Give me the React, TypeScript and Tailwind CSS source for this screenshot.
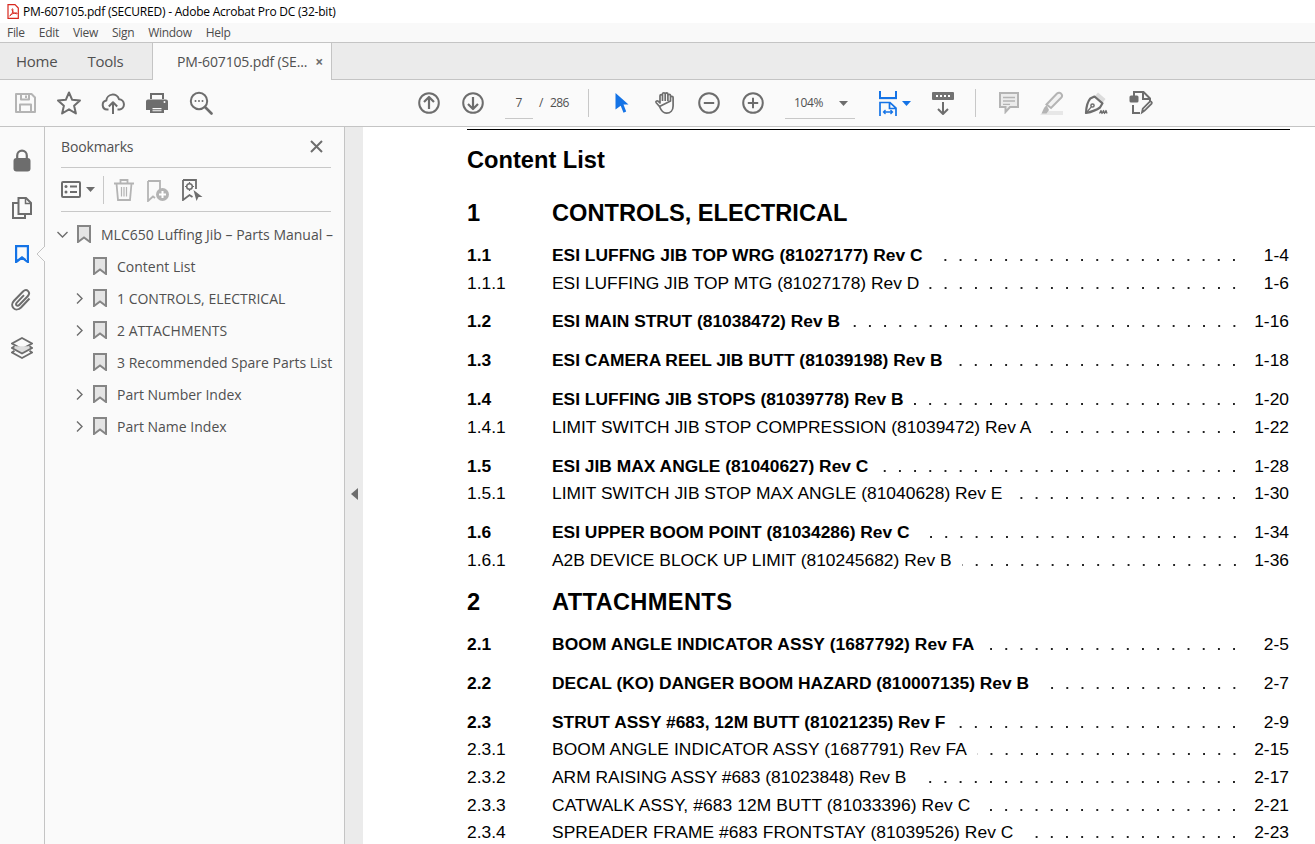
import React from "react";

const G = "#6d6d6d";
const L = "#b4b4b4";
const B = "#1473e6";

type SP = { children: React.ReactNode; s?: number; h?: number; c?: string; w?: number; vb?: string };
function I({ children, s = 24, h, c = G, w = 2, vb }: SP) {
  return (
    <svg width={s} height={h ?? s} viewBox={vb ?? `0 0 ${s} ${h ?? s}`} fill="none" stroke={c} strokeWidth={w} strokeLinejoin="round">
      {children}
    </svg>
  );
}

function Btn({ children, w = "w-[44px]" }: { children: React.ReactNode; w?: string }) {
  return <div className={`${w} h-full flex items-center justify-center shrink-0`}>{children}</div>;
}

const PdfLogo = () => (
  <svg width="12" height="15" viewBox="0 0 12 15" fill="none">
    <path d="M1 .7h7l3.3 3.3v10.3H1z" fill="#fff" stroke="#d8281f" strokeWidth="1.2" />
    <path d="M2.7 11.8c2-1 3.4-3.6 3.2-6.4-.1-1-1-.8-.9.1.2 2 2 4.1 4.6 4.3 1 .1.9-.9-.1-.9-2.500 0-5 1-6.800 2.900z" stroke="#d8281f" strokeWidth="1" />
  </svg>
);

const Save = () => (
  <I c={L}>
    <path d="M3 3h15.500L22 6.500V21H3z" />
    <path d="M8 3v5.500h8V3M13 4.500V7M7 21v-7.500h11V21" />
  </I>
);
const Star = () => (
  <I s={26} w={2}>
    <path d="M13 2.500l3.200 7.300 7.800.7-5.900 5.200 1.800 7.800L13 19.300l-6.900 4.200 1.800-7.800L2 10.500l7.800-.7z" />
  </I>
);
const Cloud = () => (
  <I>
    <path d="M7.500 18.500H6a4.500 4.500 0 0 1-.7-8.900A6.500 6.500 0 0 1 18 8.200a5.200 5.200 0 0 1 .7 10.300h-2.200" />
    <path d="M12 23V11.500M7.800 15.500l4.200-4.200 4.200 4.200" />
  </I>
);
const Printer = () => (
  <svg width="24" height="24" viewBox="0 0 24 24">
    <path fill={G} fillRule="evenodd" d="M5 2h14v6H5zM7 4v4h10V4zM3 8.500h18a2 2 0 0 1 2 2V19h-4v-4H5v4H1v-8.500a2 2 0 0 1 2-2z" />
    <path fill={G} fillRule="evenodd" d="M5 15h14v7H5zM7.500 17v1.300h9V17zM7.500 19.300v1h9v-1z" />
    <circle cx="19.500" cy="11" r="1" fill="#fff" />
  </svg>
);
const SearchDots = () => (
  <svg width="24" height="24" viewBox="0 0 24 24" fill="none" stroke={G} strokeWidth="2">
    <circle cx="10" cy="10" r="8.200" />
    <path d="M16 16l6.500 6.500" strokeWidth="2.600" strokeLinecap="round" />
    <circle cx="6.500" cy="10" r="1" fill={G} stroke="none" />
    <circle cx="10" cy="10" r="1" fill={G} stroke="none" />
    <circle cx="13.500" cy="10" r="1" fill={G} stroke="none" />
  </svg>
);
const CircleArrow = ({ down }: { down?: boolean }) => (
  <I s={22}>
    <circle cx="11" cy="11" r="9.800" />
    {down ? <path d="M11 5v12M6 12l5 5 5-5" strokeWidth="2.200" /> : <path d="M11 17V5M6 10l5-5 5 5" strokeWidth="2.200" />}
  </I>
);
const CirclePM = ({ plus }: { plus?: boolean }) => (
  <I s={22}>
    <circle cx="11" cy="11" r="9.800" />
    <path d="M5.800 11h10.400" strokeWidth="2" />
    {plus && <path d="M11 5.800v10.400" strokeWidth="2" />}
  </I>
);
const Pointer = () => (
  <svg width="14" height="21" viewBox="0 0 14 21">
    <path fill={B} d="M.5 0l13 11.500H8.500l2.700 7-2.700 1.200-2.800-7L.5 16.500z" />
  </svg>
);
const Hand = () => (
  <I w={1.700}>
    <path d="M5.500 15.500L2.200 11.800c-1-1.300.8-2.600 1.900-1.600L6 12V4.800c0-1.700 2.500-1.700 2.500 0V10M8.500 10V3c0-1.700 2.700-1.700 2.700 0v7M11.200 10V3.200c0-1.700 2.700-1.700 2.700 0V10M13.900 10V4.500c0-1.600 2.600-1.600 2.600 0V10M16.500 10V6.500c0-1.600 2.600-1.600 2.600 0V15c0 4.200-2.700 7.200-6.600 7.200-3.500 0-5.300-2.500-7-6.700z" />
  </I>
);
const Caret = ({ c = "#6d6d6d" }: { c?: string }) => (
  <svg width="9" height="5" viewBox="0 0 9 5"><path d="M0 0h9L4.500 5z" fill={c} /></svg>
);
const FitWidth = () => (
  <svg width="18" height="25" viewBox="0 0 18 25" fill="none" stroke={B} strokeWidth="2">
    <path d="M1 0v7h16V0" />
    <path d="M0 8.500h18" stroke="#dbe4ef" strokeWidth="1" />
    <path d="M1 25V11.500h10l6 5.500V25M10.500 11.500v6H17" strokeWidth="1.700" />
    <path d="M4.500 21h9M6.500 19l-2 2 2 2M11.500 19l2 2-2 2" strokeWidth="1.300" />
  </svg>
);
const Stamp = () => (
  <svg width="22" height="24" viewBox="0 0 22 24" fill="none">
    <rect x="0" y="1" width="22" height="8" rx="1" fill="#727272" />
    <path d="M4 4h2v2H4zM8 4h2v2H8zM12 4h2v2h-2zM16 4h2v2h-2z" fill="#fff" />
    <path d="M11 11v12M6 18l5 5 5-5" stroke={G} strokeWidth="2" />
  </svg>
);
const Comment = () => (
  <svg width="20" height="22" viewBox="0 0 20 22" fill="none" stroke={L} strokeWidth="2">
    <path d="M1 1h18v14h-8l-4.500 5v-5H1z" fill="#ececec" />
    <path d="M4 5.500h12M4 9h12M4 12.300h7" strokeWidth="1.300" />
  </svg>
);
const Highlighter = () => (
  <svg width="24" height="24" viewBox="0 0 24 24" fill="none">
    <path d="M0 24h23v-4H4z" fill="#e7e7e7" />
    <path d="M17 2.500c1.500-1.300 3.400-.9 4.300.3 1 1.200 1 2.700-.2 4L11 17l-4.500-3.500z" stroke={L} strokeWidth="2" fill="#f2f2f2" />
    <path d="M6.500 14L4 17l-2.500 5.500h5L9 19" fill={L} />
  </svg>
);
const Sign = () => (
  <svg width="24" height="24" viewBox="0 0 24 24" fill="none" stroke={G} strokeWidth="2.200" strokeLinejoin="round">
    <path d="M14 1.500l7.500 6.500-3 4-8-6.500z" fill="#dcdcdc" stroke="none" />
    <path d="M10.500 5.500l8 6.800-2.500 4.200C12 19.500 7 21 2 22c.2-5 1.700-11.500 4.300-14.500z" />
    <circle cx="8.500" cy="14.500" r="1.600" strokeWidth="1.500" />
    <path d="M2.500 21.500l4.800-5.700" strokeWidth="1.300" />
    <path d="M15.500 22.500l1.500-3 1 3 1.500-3 1 3 1.500-3 1 3" strokeWidth="1.300" />
  </svg>
);
const EditPdf = () => (
  <svg width="25" height="24" viewBox="0 0 25 24" fill="none" stroke={G} strokeWidth="2">
    <path d="M5 5V1h9.500L21 7.500V10M14 1.500V8h7M4 14v8h7" />
    <rect x="0.500" y="4.500" width="9" height="7" rx="1.500" fill={G} stroke="none" />
    <path d="M13 21.500l.8-3.800 7-7c1-.9 2.700.8 1.800 1.900l-7 7z" strokeWidth="1.800" />
  </svg>
);

const Lock = () => (
  <svg width="18" height="23" viewBox="0 0 18 23" fill="none">
    <path d="M4.200 11V6.500a4.800 4.800 0 0 1 9.600 0V11" stroke={G} strokeWidth="2.200" />
    <rect x="0.500" y="9" width="17" height="13.500" rx="3" fill={G} />
  </svg>
);
const Pages = () => (
  <svg width="20" height="22" viewBox="0 0 20 22" fill="none" stroke={G} strokeWidth="2">
    <path d="M6.500 17V1H14l5 5v11z" />
    <path d="M13.500 1v5.500H19" strokeWidth="1.500" />
    <path d="M6 6H1v15h12v-4" />
  </svg>
);
const Bookmark = ({ c = G, fill = "none", w = 2 }: { c?: string; fill?: string; w?: number }) => (
  <svg width="14" height="18" viewBox="0 0 14 18" fill={fill} stroke={c} strokeWidth={w}>
    <path d="M1 1h12v16l-6-4.500L1 17z" />
  </svg>
);
const Clip = () => (
  <I>
    <path d="M19.500 10.500l-8.500 9c-2.300 2.300-5.600 2.500-7.500.6-1.900-1.900-1.700-5 .5-7.300l9-9.300c1.600-1.500 3.800-1.700 5.100-.4 1.300 1.300 1.100 3.500-.4 5.100l-8.500 8.800c-.9.900-2 1-2.700.3-.7-.7-.6-1.800.3-2.700l7.200-7.500" />
  </I>
);
const Layers = () => (
  <svg width="22" height="23" viewBox="0 0 22 23" fill="none" stroke={G} strokeWidth="1.800">
    <path d="M11 1l10 5.500L11 12 1 6.500z" />
    <path d="M3.500 9.300L1 11l10 5.500L21 11l-2.500-1.700" fill="#ddd" />
    <path d="M3.500 13.800L1 15.500 11 21l10-5.500-2.500-1.700" />
  </svg>
);
const Options = () => (
  <svg width="20" height="17" viewBox="0 0 20 17" fill="none" stroke={G} strokeWidth="2">
    <rect x="1" y="1" width="18" height="15" rx="1" />
    <path d="M9 5.500h7M9 11h7" />
    <circle cx="5" cy="5.500" r="1.500" fill={G} stroke="none" />
    <circle cx="5" cy="11" r="1.500" fill={G} stroke="none" />
  </svg>
);
const Trash = () => (
  <svg width="20" height="22" viewBox="0 0 20 22" fill="none" stroke={L} strokeWidth="1.800">
    <path d="M0 4.500h20M6.500 4V1h7v3" />
    <path d="M2.500 4.500L4 21h12l1.500-16.500" />
    <path d="M7.500 8v9.500M10 8v9.500M12.500 8v9.500" strokeWidth="1.200" />
  </svg>
);
const BookmarkAdd = () => (
  <svg width="23" height="22" viewBox="0 0 23 22" fill="none">
    <path d="M1 1h12v9M1 1v20l5-4.500 2 1.500" stroke={L} strokeWidth="1.800" />
    <circle cx="15.500" cy="14.500" r="6.500" fill={L} />
    <path d="M12 14.500h7M15.500 11v7" stroke="#fff" strokeWidth="2" />
  </svg>
);
const BookmarkTarget = () => (
  <svg width="21" height="22" viewBox="0 0 21 22" fill="none" stroke={G} strokeWidth="1.800">
    <path d="M1 1h13v9M1 1v20l6.500-5 3 2" />
    <circle cx="7.500" cy="7.500" r="2.800" strokeWidth="1.500" />
    <path d="M7.500 3v1.500M7.500 10.500V12M3 7.500h1.500M10.500 7.500H12" strokeWidth="1.200" />
    <path d="M11.500 11l9 7h-4l-2 4z" fill={G} stroke="none" />
  </svg>
);
const Chevron = ({ down }: { down?: boolean }) => (
  <svg className="shrink-0" width="11" height="11" viewBox="0 0 11 11" fill="none" stroke={G} strokeWidth="1.400">
    {down ? <path d="M.5 3L5.500 8l5-5" /> : <path d="M3 .5L8 5.500l-5 5" />}
  </svg>
);

const tree: { t: string; chev: boolean }[] = [
  { t: "Content List", chev: false },
  { t: "1 CONTROLS, ELECTRICAL", chev: true },
  { t: "2 ATTACHMENTS", chev: true },
  { t: "3 Recommended Spare Parts List", chev: false },
  { t: "Part Number Index", chev: true },
  { t: "Part Name Index", chev: true },
];

const sec: { n: string; t: string; p: string; b?: boolean; m: string; k?: string }[] = [
  { n: "1.1", t: "ESI LUFFNG JIB TOP WRG (81027177) Rev C", p: "1-4", b: true, m: "mt-[17px]" },
  { n: "1.1.1", t: "ESI LUFFING JIB TOP MTG (81027178) Rev D", p: "1-6", m: "mt-[8px]" },
  { n: "1.2", t: "ESI MAIN STRUT (81038472) Rev B", p: "1-16", b: true, m: "mt-[18px]" },
  { n: "1.3", t: "ESI CAMERA REEL JIB BUTT (81039198) Rev B", p: "1-18", b: true, m: "mt-[19px]" },
  { n: "1.4", t: "ESI LUFFING JIB STOPS (81039778) Rev B", p: "1-20", b: true, m: "mt-[19px]" },
  { n: "1.4.1", t: "LIMIT SWITCH JIB STOP COMPRESSION (81039472) Rev A", p: "1-22", m: "mt-[8px]" },
  { n: "1.5", t: "ESI JIB MAX ANGLE (81040627) Rev C", p: "1-28", b: true, m: "mt-[19px]" },
  { n: "1.5.1", t: "LIMIT SWITCH JIB STOP MAX ANGLE (81040628) Rev E", p: "1-30", m: "mt-[7px]" },
  { n: "1.6", t: "ESI UPPER BOOM POINT (81034286) Rev C", p: "1-34", b: true, m: "mt-[19px]" },
  { n: "1.6.1", t: "A2B DEVICE BLOCK UP LIMIT (810245682) Rev B", p: "1-36", m: "mt-[8px]" },
];
const sec2: typeof sec = [
  { n: "2.1", t: "BOOM ANGLE INDICATOR ASSY (1687792) Rev FA", p: "2-5", b: true, m: "mt-[17px]", k: "tracking-[0.1px]" },
  { n: "2.2", t: "DECAL (KO) DANGER BOOM HAZARD (810007135) Rev B", p: "2-7", b: true, m: "mt-[19px]" },
  { n: "2.3", t: "STRUT ASSY #683, 12M BUTT (81021235) Rev F", p: "2-9", b: true, m: "mt-[19px]" },
  { n: "2.3.1", t: "BOOM ANGLE INDICATOR ASSY (1687791) Rev FA", p: "2-15", m: "mt-[7px]", k: "tracking-[0.1px]" },
  { n: "2.3.2", t: "ARM RAISING ASSY #683 (81023848) Rev B", p: "2-17", m: "mt-[8px]" },
  { n: "2.3.3", t: "CATWALK ASSY, #683 12M BUTT (81033396) Rev C", p: "2-21", m: "mt-[8px]", k: "tracking-[0.1px]" },
  { n: "2.3.4", t: "SPREADER FRAME #683 FRONTSTAY (81039526) Rev C", p: "2-23", m: "mt-[7px]", k: "tracking-[0.05px]" },
];

function Row({ r }: { r: (typeof sec)[number] }) {
  return (
    <div className={`${r.m} flex h-5 items-center shrink-0 text-[17.400px] leading-5 text-black ${r.b ? "font-bold" : ""}`}>
      <div className="w-[85px] shrink-0">{r.n}</div>
      <div className={`shrink-0 whitespace-nowrap ${r.k ?? ""}`}>{r.t}</div>
      <div className="flex-1 min-w-0 h-[2px] self-end mb-[4px] ml-[10px] mr-[37px] bg-[radial-gradient(circle,#222_0.8px,transparent_1.100px)] bg-[size:15.200px_2px] bg-right bg-repeat-x" />
      <div className="w-[10px] mr-[1px] shrink-0 flex justify-end whitespace-nowrap font-normal">
        <span className="shrink-0">{r.p}</span>
      </div>
    </div>
  );
}

export default function App() {
  return (
    <div className="w-[1315px] h-[844px] overflow-hidden bg-white flex flex-col font-['Open_Sans','Noto_Sans',sans-serif] text-[#505050]">
      {/* title bar */}
      <div className="h-[23px] shrink-0 bg-white flex items-center pl-[7px] gap-[4px] text-[12px] tracking-[-0.225px] text-black">
        <PdfLogo />
        <span>PM-607105.pdf (SECURED) - Adobe Acrobat Pro DC (32-bit)</span>
      </div>
      {/* menu */}
      <div className="h-[20px] shrink-0 bg-[#f9f9f9] border-b border-[#c4c4c4] flex items-center pl-[7px] gap-[14px] text-[12px] tracking-[-0.300px] text-[#4c4c4c]">
        <span>File</span><span>Edit</span><span>View</span><span>Sign</span><span>Window</span><span>Help</span>
      </div>
      {/* tabs */}
      <div className="h-[37px] shrink-0 bg-[#ebebeb] border-b border-[#c4c4c4] flex text-[#505050]">
        <div className="w-[152px] flex items-center pl-[16px] gap-[30px] text-[15px] tracking-[-0.250px]">
          <span>Home</span><span>Tools</span>
        </div>
        <div className="w-[180px] h-[37px] bg-[#fafafa] border-x border-[#c4c4c4] flex items-center pl-[24px] pr-[8px] justify-between text-[14px] tracking-[-0.150px]">
          <span>PM-607105.pdf (SE...</span>
          <span className="text-[14px] font-bold text-[#6d6d6d]">×</span>
        </div>
      </div>
      {/* toolbar */}
      <div className="h-[47px] shrink-0 bg-[#fafafa] border-b border-[#c4c4c4] flex items-center pl-[3px]">
        <Btn><Save /></Btn>
        <Btn><Star /></Btn>
        <Btn><Cloud /></Btn>
        <Btn><Printer /></Btn>
        <Btn><SearchDots /></Btn>
        <div className="w-[184px] shrink-0" />
        <Btn><CircleArrow /></Btn>
        <Btn><CircleArrow down /></Btn>
        <div className="ml-[10px] w-[28px] h-[30px] mt-[1px] border-b border-[#c8c8c8] flex items-center justify-center text-[12px]">7</div>
        <span className="ml-[6px] text-[12px] w-[6px]">/</span>
        <span className="ml-[5px] text-[12px] w-[22px] tracking-[-0.600px]">286</span>
        <div className="ml-[16px] w-px h-[28px] bg-[#c8c8c8]" />
        <div className="w-[10px] shrink-0" />
        <Btn><div className="ml-[2px] flex"><Pointer /></div></Btn>
        <Btn><div className="ml-[2px] flex"><Hand /></div></Btn>
        <Btn><CirclePM /></Btn>
        <Btn><CirclePM plus /></Btn>
        <div className="ml-[10px] w-[70px] h-[30px] mt-[1px] border-b border-[#c8c8c8] flex items-center justify-between pl-[9px] pr-[7px] text-[12px] tracking-[-0.350px]">
          <span>104%</span><Caret />
        </div>
        <div className="ml-[24px] w-[18px] flex justify-center"><FitWidth /></div>
        <div className="ml-[5px]"><Caret c={B} /></div>
        <div className="ml-[21px]"><Stamp /></div>
        <div className="ml-[21px] w-px h-[28px] bg-[#c8c8c8]" />
        <div className="ml-[23px]"><Comment /></div>
        <div className="ml-[21px]"><Highlighter /></div>
        <div className="ml-[20px]"><Sign /></div>
        <div className="ml-[21px]"><EditPdf /></div>
      </div>
      {/* main */}
      <div className="flex-1 min-h-0 flex">
        {/* rail */}
        <div className="relative w-[45px] shrink-0 bg-[#fafafa] border-r border-[#c4c4c4] flex flex-col items-center pt-[22px]">
          <div className="h-[23px] flex items-center"><Lock /></div>
          <div className="mt-[25px] h-[22px] flex items-center"><Pages /></div>
          <div className="mt-[24px] h-[22px] flex items-center"><Bookmark c={B} w={2.400} /></div>
          <div className="mt-[23px] h-[24px] flex items-center"><Clip /></div>
          <div className="mt-[25px] h-[23px] flex items-center"><Layers /></div>
          <svg className="absolute right-[-1px] top-[119px]" width="9" height="16" viewBox="0 0 9 16">
            <path d="M9 0L1 8l8 8" fill="#fafafa" stroke="#c4c4c4" />
          </svg>
        </div>
        {/* bookmarks panel */}
        <div className="w-[300px] shrink-0 bg-[#fafafa] border-r border-[#c4c4c4] flex flex-col pl-[16px] pr-[13px]">
          <div className="h-[41px] shrink-0 border-b border-[#c8c8c8] flex items-center justify-between pr-[8px] pb-[2px] text-[14px] tracking-[-0.150px]">
            <span>Bookmarks</span>
            <svg width="13" height="13" viewBox="0 0 13 13" stroke={G} strokeWidth="2"><path d="M1 1l11 11M12 1L1 12" /></svg>
          </div>
          <div className="h-[44px] shrink-0 border-b border-[#c8c8c8] flex items-center">
            <Options />
            <div className="ml-[5px]"><Caret /></div>
            <div className="ml-[8px] w-px h-[28px] bg-[#c8c8c8]" />
            <div className="ml-[10px]"><Trash /></div>
            <div className="ml-[13px] mt-[2px]"><BookmarkAdd /></div>
            <div className="ml-[12px]"><BookmarkTarget /></div>
          </div>
          <div className="pt-[6px] flex flex-col text-[14px]">
            <div className="h-[32px] flex items-center whitespace-nowrap -mr-[7px] -ml-[4px]">
              <Chevron down />
              <div className="ml-[9px] shrink-0"><Bookmark c="#858585" fill="#e4e4e4" /></div>
              <span className="ml-[10px]">MLC650 Luffing Jib – Parts Manual –</span>
            </div>
            {tree.map((r) => (
              <div key={r.t} className="h-[32px] flex items-center whitespace-nowrap -mr-[7px] pl-[13px]">
                <div className="w-[10px] shrink-0 flex items-center">{r.chev && <Chevron />}</div>
                <div className="ml-[9px] shrink-0"><Bookmark c="#858585" fill="#e4e4e4" /></div>
                <span className="ml-[10px]">{r.t}</span>
              </div>
            ))}
          </div>
        </div>
        {/* collapse strip */}
        <div className="w-[18px] shrink-0 bg-[#ebebeb] flex items-center justify-center pt-[16px]">
          <svg width="7" height="12" viewBox="0 0 7 12"><path d="M7 0v12L0 6z" fill="#6d6d6d" /></svg>
        </div>
        {/* document */}
        <div className="flex-1 min-w-0 bg-white overflow-hidden pl-[104px] pr-[25px] font-['Liberation_Sans',Arial,sans-serif] flex flex-col text-black">
          <div className="mt-[2px] h-px shrink-0 bg-black" />
          <div className="mt-[15px] h-[30px] shrink-0 leading-[30px] text-[23.650px] font-bold">Content List</div>
          <div className="mt-[23px] h-[30px] shrink-0 flex leading-[30px] text-[23.650px] font-bold">
            <div className="w-[85px]">1</div><div>CONTROLS, ELECTRICAL</div>
          </div>
          {sec.map((r) => <Row key={r.n} r={r} />)}
          <div className="mt-[17px] h-[30px] shrink-0 flex leading-[30px] text-[23.650px] font-bold">
            <div className="w-[85px]">2</div><div className="tracking-[0.35px]">ATTACHMENTS</div>
          </div>
          {sec2.map((r) => <Row key={r.n} r={r} />)}
        </div>
      </div>
    </div>
  );
}
